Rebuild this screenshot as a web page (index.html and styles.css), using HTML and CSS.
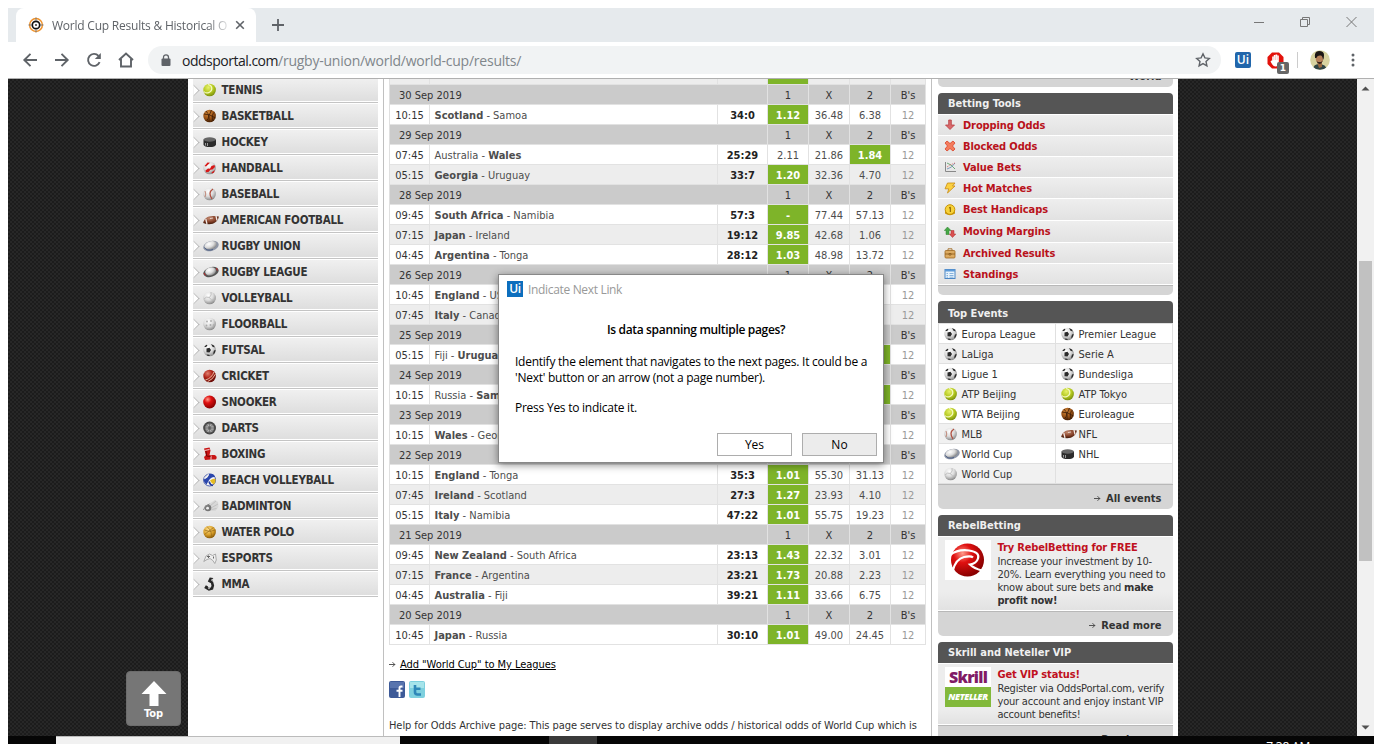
FILE: index.html
```
<!DOCTYPE html>
<html lang="en">
<head>
<meta charset="utf-8">
<title>World Cup Results &amp; Historical Odds</title>
<link rel="stylesheet" href="styles.css">
</head>
<body>
<svg class="defs" width="0" height="0">
<defs>
<radialGradient id="gy" cx=".4" cy=".3" r=".7"><stop offset="0" stop-color="#e6f06a"/><stop offset=".6" stop-color="#b3c81e"/><stop offset="1" stop-color="#7d9210"/></radialGradient>
<radialGradient id="go" cx=".4" cy=".3" r=".7"><stop offset="0" stop-color="#d48a3c"/><stop offset=".6" stop-color="#9a5214"/><stop offset="1" stop-color="#4c2406"/></radialGradient>
<radialGradient id="gw" cx=".4" cy=".3" r=".7"><stop offset="0" stop-color="#fff"/><stop offset=".55" stop-color="#dcdcdc"/><stop offset="1" stop-color="#8c8c8c"/></radialGradient>
<radialGradient id="gr" cx=".35" cy=".3" r=".7"><stop offset="0" stop-color="#ff9a8a"/><stop offset=".4" stop-color="#e01010"/><stop offset="1" stop-color="#8a0000"/></radialGradient>
<radialGradient id="gc" cx=".35" cy=".3" r=".7"><stop offset="0" stop-color="#e08070"/><stop offset=".5" stop-color="#b02318"/><stop offset="1" stop-color="#6a0c08"/></radialGradient>
<radialGradient id="gg" cx=".4" cy=".3" r=".7"><stop offset="0" stop-color="#ffe08a"/><stop offset=".6" stop-color="#d9a02a"/><stop offset="1" stop-color="#8a5a08"/></radialGradient>
<radialGradient id="gb" cx=".4" cy=".3" r=".7"><stop offset="0" stop-color="#c48a70"/><stop offset=".6" stop-color="#844028"/><stop offset="1" stop-color="#401808"/></radialGradient>
<symbol id="tennis" viewBox="0 0 16 14"><circle cx="6.600" cy="7" r="6.300" fill="url(#gy)"/><path d="M5 1.500C9.500 2 10 7.500 6.500 9.200S2 10 1 8.500" fill="none" stroke="#f4f9c0" stroke-width="1.200"/></symbol>
<symbol id="basket" viewBox="0 0 16 14"><circle cx="6.600" cy="7" r="6.300" fill="url(#go)"/><path d="M1 5Q7 5 12.500 9M8.500 1Q5 6 6 13M3 2Q8 7 3.500 12M11.500 3Q8 6 10 12" fill="none" stroke="#3a1a06" stroke-width=".8"/></symbol>
<symbol id="puck" viewBox="0 0 16 14"><path d="M.5 4.500v5c0 3.400 12.500 3.400 12.500 0v-5z" fill="#2c2c2c"/><ellipse cx="6.700" cy="4.500" rx="6.200" ry="2.200" fill="#666"/><path d="M2.500 8v2.500M4.500 8v3" stroke="#9a9a9a"/></symbol>
<symbol id="hand" viewBox="0 0 16 14"><circle cx="6.600" cy="7" r="6.300" fill="url(#gw)"/><path d="M1.500 5L4.500 1.500l2.500.2L3 5.500zM2.500 9.500L5 7.500l2 .3L8.500 5l3-1 .5 2-2.500 2.500-2 .3L5.500 11l-2.500.3zM8.500 11.500l3.300-2.500-.8 2.500-2 1z" fill="#d81818"/></symbol>
<symbol id="base" viewBox="0 0 16 14"><circle cx="6.600" cy="7" r="6.300" fill="url(#gw)"/><path d="M10 2Q4.500 5.500 9 11.800" fill="none" stroke="#b05040" stroke-width="1.300"/><path d="M2 4Q3.500 7 2 10" fill="none" stroke="#c08878"/></symbol>
<symbol id="amfoot" viewBox="0 0 16 14"><path d="M.2 10C1 4.500 6 1.500 15.800 3.500 15 10 8 13 .2 10z" fill="url(#gb)"/><path d="M2.800 6l1.200 5M13 3l1 4.500" stroke="#f2eae6" stroke-width="1.300"/><path d="M7 5.500l3-.5" stroke="#f2eae6" stroke-width=".8"/></symbol>
<symbol id="rugby" viewBox="0 0 16 14"><ellipse cx="8" cy="7" rx="7.900" ry="5" transform="rotate(-17 8 7)" fill="#8d95a6"/><ellipse cx="7.800" cy="6.200" rx="6.300" ry="4" transform="rotate(-17 8 7)" fill="url(#gw)"/><path d="M1.500 8.500Q4 12.500 10 10.500" fill="none" stroke="#4f6186"/></symbol>
<symbol id="rleague" viewBox="0 0 16 14"><ellipse cx="8" cy="7" rx="7.900" ry="4.800" transform="rotate(-17 8 7)" fill="#555"/><ellipse cx="7.800" cy="6.300" rx="5.500" ry="4" transform="rotate(-17 8 7)" fill="url(#gw)"/><path d="M1 8l1.500 2.500M13.500 3l.8 2.500" stroke="#c02828"/></symbol>
<symbol id="volley" viewBox="0 0 16 14"><circle cx="6.600" cy="7" r="6.300" fill="url(#gw)"/><path d="M6.500 6.500Q3 5 1 8M6.500 6.500Q9 4 8 1M6.500 6.500Q8 10 12 9" fill="none" stroke="#b8b8b8" stroke-width=".8"/></symbol>
<symbol id="floor" viewBox="0 0 16 14"><circle cx="6.600" cy="7" r="6.300" fill="url(#gw)"/><g fill="#aaa"><circle cx="4" cy="4.500" r=".9"/><circle cx="8" cy="4" r=".9"/><circle cx="3.500" cy="8.500" r=".9"/><circle cx="7.500" cy="8" r="1"/><circle cx="10.500" cy="8" r=".8"/></g></symbol>
<symbol id="soccer" viewBox="0 0 16 14"><circle cx="6.600" cy="7" r="6.300" fill="url(#gw)"/><path d="M3.500 5.500l3-.7 1.500 2.200-1.500 2.500-3-.3zM1.200 4l2-2.300 1.300.6-1.300 1.700zM8 1l3 1.400.8 2-2.300-.6zM11 7.500l1.700-.5-1 3.300-1.700.7zM3.500 11.500l2.500.3 1 1.200-2.500-.3z" fill="#2a2a2a"/></symbol>
<symbol id="cricket" viewBox="0 0 16 14"><circle cx="6.600" cy="7" r="6.300" fill="url(#gc)"/><path d="M11 2.800Q9 9 2.200 11.200M12.500 5Q10 10.500 4.500 12.700" fill="none" stroke="#f0c8b0" stroke-width=".9"/></symbol>
<symbol id="snook" viewBox="0 0 16 14"><circle cx="6.600" cy="7" r="6.400" fill="url(#gr)"/></symbol>
<symbol id="darts" viewBox="0 0 16 14"><circle cx="6.600" cy="7" r="6.400" fill="#484848"/><circle cx="6.600" cy="7" r="4.500" fill="#999"/><circle cx="6.600" cy="7" r="2.600" fill="#888" stroke="#ddd" stroke-width=".6"/><path d="M6.600 1v12M.6 7h12M2.500 3l8 8M10.500 3l-8 8" stroke="#555" stroke-width=".6"/></symbol>
<symbol id="box" viewBox="0 0 16 14"><path d="M1 1.500L6.500.5l1 3-1 4.500h5c3 1 2.500 4 1 4.500H8L2 13l-1-3 2-2z" fill="#c81414"/><path d="M1.500 3.500l5-1M8 8.500v4" stroke="#fff" stroke-width=".8"/><path d="M3 4l.5 5 4 .5" stroke="#700" fill="none"/></symbol>
<symbol id="beach" viewBox="0 0 16 14"><circle cx="6.600" cy="7" r="6" fill="#f4f4f4" stroke="#223a9c" stroke-width=".8"/><path d="M6 1Q11 0 12 4 8 3.500 5.500 8L3.500 11.500Q.5 9 .6 6.500 4.500 5.500 6 1z" fill="#2a46ac"/><path d="M1.500 5Q4.500 4.500 5.500 1.200" stroke="#eee" stroke-width="1.200" fill="none"/><path d="M7 7.500q3-2.500 5.600-1.500Q13 9.500 11 11.500 8.500 10.500 7 7.500z" fill="#e4bb22"/><path d="M6 8.500q1 3.500 4 4" stroke="#223a9c" stroke-width="1.600" fill="none"/></symbol>
<symbol id="badm" viewBox="0 0 16 14"><path d="M6 5l6-4 3 2 .5 5-3 4L8 12z" fill="#d8d8d8"/><path d="M7 7l6-5M8 9l7-4M8.500 10.500l5-1" stroke="#b8b8b8" stroke-width=".7"/><circle cx="5" cy="9" r="3.300" fill="#777"/><circle cx="4.600" cy="9.200" r="1.400" fill="#eee"/><path d="M.5 11q1-5 6-6" stroke="#888" fill="none"/></symbol>
<symbol id="wpolo" viewBox="0 0 16 14"><circle cx="6.600" cy="7" r="6.300" fill="url(#gg)"/><path d="M1.500 5Q6 8 12.500 5M4 1.500Q10 7 8 13M1.500 9.500L10.500 2.500" fill="none" stroke="#9a6a18" stroke-width=".7"/></symbol>
<symbol id="esport" viewBox="0 0 16 14"><path d="M.8 10.500L3 5l3.500-2 3 1.500 3-1.500.8 6-1.500 3.500-2-3L7 7.500l-3 1z" fill="#eee" stroke="#999" stroke-width=".8"/><path d="M4 5.500h3M5.500 4.500v2.500M10.500 5.500v2" stroke="#666"/></symbol>
<symbol id="mma" viewBox="0 0 16 14"><path d="M10 2.300L7.500 2 6.500 4l2.500 1.500.8 3-.8 3-3 .8L3 10.500 4 8.800" fill="none" stroke="#262626" stroke-width="2.600"/><circle cx="9.300" cy="2.600" r=".9" fill="#ccc"/><circle cx="6" cy="11.500" r=".8" fill="#ccc"/></symbol>
<symbol id="arr" viewBox="0 0 7 7"><path d="M0 3.500h6M3.500 1.200L5.800 3.500 3.500 5.800" fill="none" stroke="#444" stroke-width=".9"/></symbol>
</defs>
</svg>

<div class="window">
  <div class="tabs">
    <div class="tab">
      <svg width="16" height="16" viewBox="0 0 16 16"><circle cx="8" cy="8" r="6.400" fill="#fff" stroke="#f0922a" stroke-width="1.500"/><path d="M8 .5v3M8 12.500v3M.5 8h3M12.500 8h3" stroke="#777" stroke-width="1"/><circle cx="8" cy="8" r="3.700" fill="#fff" stroke="#111" stroke-width="1.700"/><circle cx="8" cy="8" r=".9" fill="#222"/></svg>
      <span class="title">World Cup Results &amp; Historical O</span>
      <svg class="x" width="10" height="10" viewBox="0 0 10 10"><path d="M1.200 1.200l7.600 7.600M8.800 1.200L1.200 8.800" stroke="#5f6368" stroke-width="1.600"/></svg>
    </div>
    <svg class="plus" width="12" height="12" viewBox="0 0 12 12"><path d="M6 0v12M0 6h12" stroke="#5f6368" stroke-width="1.800"/></svg>
    <svg class="winbtn" width="104" height="12" viewBox="0 0 104 12"><g fill="none" stroke="#777"><path d="M0 6.500h10M46.500 3.500h7v7h-7zM48.500 3.500v-2h7v7h-2"/><path d="M92.500 1l10 10M102.500 1l-10 10"/></g></svg>
  </div>
  <div class="toolbar">
    <svg class="nav" width="112" height="18" viewBox="0 0 112 18"><g fill="none" stroke="#5f6368" stroke-width="1.900"><path d="M15 9H2.500M8.500 2.800L2.300 9l6.200 6.200M33 9h12.500M39.500 2.800L45.700 9l-6.200 6.200"/><path d="M77.600 11.200A6 6 0 1 1 76.500 4.800"/><path d="M97 9l7-6.500L111 9M99 8v7.500h10V8"/></g><path d="M78.800 2v6h-6z" fill="#5f6368"/></svg>
    <div class="url">
      <svg width="10" height="13" viewBox="0 0 10 13"><rect x=".5" y="4.500" width="9" height="7.500" rx="1" fill="#5f6368"/><path d="M2.500 5V3.300a2.500 2.500 0 0 1 5 0V5" fill="none" stroke="#5f6368" stroke-width="1.300"/></svg>
      <span class="addr"><b>oddsportal.com</b>/rugby-union/world/world-cup/results/</span>
      <svg class="star" width="16" height="16" viewBox="0 0 16 16"><path d="M8 1.800l1.900 4.100 4.400.5-3.300 3 .9 4.400L8 11.600l-3.900 2.200.9-4.400-3.300-3 4.400-.5z" fill="none" stroke="#5f6368" stroke-width="1.400"/></svg>
    </div>
    <span class="uipath">Ui</span>
    <span class="adb"><svg width="17" height="17" viewBox="0 0 17 17"><path d="M5 .5h7L16.500 5v7L12 16.500H5L.5 12V5z" fill="#e3120b"/><path d="M5.200 8.500V4.500h1.600V3h1.700v-.5h1.700v1h1.600V11q-.3 3.500-3.300 3.500-2 0-3.200-2L3.500 9.500l1-.9z" fill="#fff"/><path d="M6.900 4.500v3.500M8.500 3v5M10.200 4v4" stroke="#f09a96" stroke-width=".5"/></svg><em>1</em></span>
    <i class="vsep"></i>
    <svg class="avatar" width="20" height="20" viewBox="0 0 20 20"><clipPath id="av"><circle cx="10" cy="10" r="9.800"/></clipPath><g clip-path="url(#av)"><path d="M0 0h20v20H0z" fill="#d8d3a0"/><path d="M3 20q0-6 6-6 7 0 8 6z" fill="#2f4444"/><path d="M7 12h5v5l-3 1z" fill="#9a6a40"/><ellipse cx="9.500" cy="8.500" rx="3.800" ry="5" fill="#b58058"/><path d="M5 8Q4 1 9 1t5 4q0 4-1 5-.3-4-2-4.500Q7 5 6.500 8z" fill="#1c1614"/><path d="M6.500 11q1 3 3 3t3.300-3.500L11 12H8z" fill="#34241c"/></g></svg>
    <svg class="dots" width="4" height="14" viewBox="0 0 4 14"><g fill="#5f6368"><circle cx="2" cy="2" r="1.500"/><circle cx="2" cy="7" r="1.500"/><circle cx="2" cy="12" r="1.500"/></g></svg>
  </div>

  <div class="view">
    <div class="dark left"><div class="totop"><svg width="26" height="27" viewBox="0 0 26 27"><path d="M13 1l12.500 13H17.500v12h-9V14H.5z" fill="#fff"/></svg><span>Top</span></div></div>
    <div class="side">
      <ul>
        <li><svg><use href="#tennis"/></svg>TENNIS</li>
        <li><svg><use href="#basket"/></svg>BASKETBALL</li>
        <li><svg><use href="#puck"/></svg>HOCKEY</li>
        <li><svg><use href="#hand"/></svg>HANDBALL</li>
        <li><svg><use href="#base"/></svg>BASEBALL</li>
        <li><svg><use href="#amfoot"/></svg>AMERICAN FOOTBALL</li>
        <li><svg><use href="#rugby"/></svg>RUGBY UNION</li>
        <li><svg><use href="#rleague"/></svg>RUGBY LEAGUE</li>
        <li><svg><use href="#volley"/></svg>VOLLEYBALL</li>
        <li><svg><use href="#floor"/></svg>FLOORBALL</li>
        <li><svg><use href="#soccer"/></svg>FUTSAL</li>
        <li><svg><use href="#cricket"/></svg>CRICKET</li>
        <li><svg><use href="#snook"/></svg>SNOOKER</li>
        <li><svg><use href="#darts"/></svg>DARTS</li>
        <li><svg><use href="#box"/></svg>BOXING</li>
        <li><svg><use href="#beach"/></svg>BEACH VOLLEYBALL</li>
        <li><svg><use href="#badm"/></svg>BADMINTON</li>
        <li><svg><use href="#wpolo"/></svg>WATER POLO</li>
        <li><svg><use href="#esport"/></svg>ESPORTS</li>
        <li><svg><use href="#mma"/></svg>MMA</li>
      </ul>
    </div>
    <div class="main">
      <table>
        <colgroup><col class="c1"><col class="c2"><col class="c3"><col class="c4"><col class="c4"><col class="c4"><col class="c5"></colgroup>
        <tr class="e cut"><td></td><td></td><td></td><td class="g"></td><td></td><td></td><td></td></tr>
        <tr class="h"><th colspan="3">30 Sep 2019</th><th>1</th><th>X</th><th>2</th><th>B's</th></tr>
        <tr><td>10:15</td><td><b>Scotland</b> - Samoa</td><td>34:0</td><td class="g">1.12</td><td>36.48</td><td>6.38</td><td>12</td></tr>
        <tr class="h"><th colspan="3">29 Sep 2019</th><th>1</th><th>X</th><th>2</th><th>B's</th></tr>
        <tr><td>07:45</td><td>Australia - <b>Wales</b></td><td>25:29</td><td>2.11</td><td>21.86</td><td class="g">1.84</td><td>12</td></tr>
        <tr class="e"><td>05:15</td><td><b>Georgia</b> - Uruguay</td><td>33:7</td><td class="g">1.20</td><td>32.36</td><td>4.70</td><td>12</td></tr>
        <tr class="h"><th colspan="3">28 Sep 2019</th><th>1</th><th>X</th><th>2</th><th>B's</th></tr>
        <tr><td>09:45</td><td><b>South Africa</b> - Namibia</td><td>57:3</td><td class="g">-</td><td>77.44</td><td>57.13</td><td>12</td></tr>
        <tr class="e"><td>07:15</td><td><b>Japan</b> - Ireland</td><td>19:12</td><td class="g">9.85</td><td>42.68</td><td>1.06</td><td>12</td></tr>
        <tr><td>04:45</td><td><b>Argentina</b> - Tonga</td><td>28:12</td><td class="g">1.03</td><td>48.98</td><td>13.72</td><td>12</td></tr>
        <tr class="h"><th colspan="3">26 Sep 2019</th><th>1</th><th>X</th><th>2</th><th>B's</th></tr>
        <tr><td>10:45</td><td><b>England</b> - USA</td><td></td><td class="g"></td><td></td><td></td><td>12</td></tr>
        <tr class="e"><td>07:45</td><td><b>Italy</b> - Canada</td><td></td><td class="g"></td><td></td><td></td><td>12</td></tr>
        <tr class="h"><th colspan="3">25 Sep 2019</th><th></th><th></th><th></th><th>B's</th></tr>
        <tr><td>05:15</td><td>Fiji - <b>Uruguay</b></td><td></td><td></td><td></td><td class="g"></td><td>12</td></tr>
        <tr class="h"><th colspan="3">24 Sep 2019</th><th></th><th></th><th></th><th>B's</th></tr>
        <tr><td>10:15</td><td>Russia - <b>Samoa</b></td><td></td><td></td><td></td><td class="g"></td><td>12</td></tr>
        <tr class="h"><th colspan="3">23 Sep 2019</th><th></th><th></th><th></th><th>B's</th></tr>
        <tr><td>10:15</td><td><b>Wales</b> - Georgia</td><td></td><td class="g"></td><td></td><td></td><td>12</td></tr>
        <tr class="h"><th colspan="3">22 Sep 2019</th><th></th><th></th><th></th><th>B's</th></tr>
        <tr><td>10:15</td><td><b>England</b> - Tonga</td><td>35:3</td><td class="g">1.01</td><td>55.30</td><td>31.13</td><td>12</td></tr>
        <tr class="e"><td>07:45</td><td><b>Ireland</b> - Scotland</td><td>27:3</td><td class="g">1.27</td><td>23.93</td><td>4.10</td><td>12</td></tr>
        <tr><td>05:15</td><td><b>Italy</b> - Namibia</td><td>47:22</td><td class="g">1.01</td><td>55.75</td><td>19.23</td><td>12</td></tr>
        <tr class="h"><th colspan="3">21 Sep 2019</th><th>1</th><th>X</th><th>2</th><th>B's</th></tr>
        <tr><td>09:45</td><td><b>New Zealand</b> - South Africa</td><td>23:13</td><td class="g">1.43</td><td>22.32</td><td>3.01</td><td>12</td></tr>
        <tr class="e"><td>07:15</td><td><b>France</b> - Argentina</td><td>23:21</td><td class="g">1.73</td><td>20.88</td><td>2.23</td><td>12</td></tr>
        <tr><td>04:45</td><td><b>Australia</b> - Fiji</td><td>39:21</td><td class="g">1.11</td><td>33.66</td><td>6.75</td><td>12</td></tr>
        <tr class="h"><th colspan="3">20 Sep 2019</th><th>1</th><th>X</th><th>2</th><th>B's</th></tr>
        <tr><td>10:45</td><td><b>Japan</b> - Russia</td><td>30:10</td><td class="g">1.01</td><td>49.00</td><td>24.45</td><td>12</td></tr>
      </table>
      <div class="add"><svg width="7" height="7"><use href="#arr"/></svg><a>Add "World Cup" to My Leagues</a></div>
      <div class="social">
        <svg width="16" height="18" viewBox="0 0 16 18"><rect width="16" height="17" rx="2" fill="#3d5a98"/><path d="M1 1h14v6H1z" fill="#5874ae"/><path d="M13.500 5.500h-1.500q-1.500 0-1.500 1.700V16M7.500 9.700h6" stroke="#fff" stroke-width="1.900" fill="none"/></svg>
        <svg width="16" height="18" viewBox="0 0 16 18"><rect width="16" height="17" rx="2" fill="#7ed0de"/><path d="M1 1h14v6H1z" fill="#a6e4ea"/><path d="M6 4v7q0 2.500 2.500 2.500H12M5.500 7.700h6" stroke="#2e87b8" stroke-width="2.600" fill="none"/></svg>
      </div>
      <p class="help">Help for Odds Archive page: This page serves to display archive odds / historical odds of World Cup which is<br>sorted in World category of Oddsportal odds comparison service. In World Cup results archived here you</p>
    </div>
    <div class="right">
      <div class="foot first"><b>World</b></div>
      <section class="tools">
        <h2>Betting Tools</h2>
        <ul>
          <li><svg viewBox="0 0 12 12"><path d="M4.700 1h2.600v5H10.500L6 10.500 1.500 6h3.200z" fill="#d9696b" stroke="#b83c40" stroke-width=".8"/></svg>Dropping Odds</li>
          <li><svg viewBox="0 0 12 12"><path d="M1 3l2-2 3 2.500L9 1l2 2-2.500 3L11 9l-2 2-3-2.500L3 11 1 9l2.500-3z" fill="#f47c5c" stroke="#d8432a" stroke-width=".8"/></svg>Blocked Odds</li>
          <li><svg viewBox="0 0 12 12"><path d="M1.500 1v9.500H12" stroke="#888" fill="none"/><path d="M3 2q4 1 8 6" stroke="#4a9a5a" stroke-width=".8" fill="none"/><path d="M3 8q5-1 8-6" stroke="#6488b0" stroke-width=".8" fill="none"/><path d="M3 6l3-2 5-2" stroke="#d05050" stroke-width=".8" fill="none" stroke-dasharray="1 1"/></svg>Value Bets</li>
          <li><svg viewBox="0 0 12 12"><path d="M3.500 1H11L8.500 4h2.500L3.500 11l1.300-4.200H1z" fill="#fbd040" stroke="#c88a10" stroke-width=".8"/></svg>Hot Matches</li>
          <li class="t"><svg viewBox="0 0 12 12"><path d="M1 6v3.500q5 3.500 10 0V6z" fill="#c89408"/><circle cx="6" cy="5.500" r="4.800" fill="#f7d23a" stroke="#c89408"/><path d="M5 4.200l1.300-1V8" stroke="#7a5600" fill="none"/></svg>Best Handicaps</li>
          <li class="t"><svg viewBox="0 0 12 12"><path d="M3.500 1L7 4.500H5v4H2v-4H.3z" fill="#45a845" stroke="#2c7c2c" stroke-width=".5"/><path d="M8.500 11.500L5.300 8H7V4.500h3V8h1.800z" fill="#da5050" stroke="#a82c2c" stroke-width=".5"/></svg>Moving Margins</li>
          <li><svg viewBox="0 0 12 12"><path d="M4 4V1.800h4V4" stroke="#a87838" fill="none"/><rect x="1" y="3.500" width="10" height="7.500" rx="1" fill="#dcab62" stroke="#a06820" stroke-width=".8"/><path d="M1 7h10M5 6.500h2v1.500H5z" stroke="#8a5818" stroke-width=".8" fill="#f4e0a0"/></svg>Archived Results</li>
          <li><svg viewBox="0 0 12 12"><rect x="1" y="1.500" width="10" height="9" fill="#e8f3fc" stroke="#4b86c4"/><path d="M1 2.500h10" stroke="#5d9ad8" stroke-width="2"/><path d="M2.500 5.500H4M2.500 7.500H4M2.500 9.200H4M5.500 5.500h4M5.500 7.500h4M5.500 9.200h4" stroke="#7cabd8" stroke-width=".9"/></svg>Standings</li>
        </ul>
        <div class="foot thin"></div>
      </section>
      <section class="events">
        <h2>Top Events</h2>
        <div class="grid">
          <a><svg><use href="#soccer"/></svg>Europa League</a><a><svg><use href="#soccer"/></svg>Premier League</a>
          <a><svg><use href="#soccer"/></svg>LaLiga</a><a><svg><use href="#soccer"/></svg>Serie A</a>
          <a><svg><use href="#soccer"/></svg>Ligue 1</a><a><svg><use href="#soccer"/></svg>Bundesliga</a>
          <a><svg><use href="#tennis"/></svg>ATP Beijing</a><a><svg><use href="#tennis"/></svg>ATP Tokyo</a>
          <a><svg><use href="#tennis"/></svg>WTA Beijing</a><a><svg><use href="#basket"/></svg>Euroleague</a>
          <a><svg><use href="#base"/></svg>MLB</a><a><svg><use href="#amfoot"/></svg>NFL</a>
          <a><svg><use href="#rugby"/></svg>World Cup</a><a><svg><use href="#puck"/></svg>NHL</a>
          <a><svg><use href="#volley"/></svg>World Cup</a><a></a>
        </div>
        <div class="foot"><svg width="7" height="7"><use href="#arr"/></svg><b>All events</b></div>
      </section>
      <section>
        <h2>RebelBetting</h2>
        <div class="body rb">
          <svg width="46" height="40" viewBox="0 0 46 40"><path d="M0 0h46v40H0z" fill="#fff"/><circle cx="22.500" cy="20" r="16.500" fill="url(#gr)"/><path d="M5 15Q13 9 24 10.500q11 1.500 9 8-1.500 5-8 6 4 4 12 6" fill="none" stroke="#fff" stroke-width="2.200"/><path d="M8 30Q11 19 19 17q7-1.500 9 .5" fill="none" stroke="#fff" stroke-width="2.200"/></svg>
          <div><h3>Try RebelBetting for FREE</h3><p>Increase your investment by 10-<br>20%. Learn everything you need to<br>know about sure bets and <b>make<br>profit now!</b></p></div>
        </div>
        <div class="foot"><svg width="7" height="7"><use href="#arr"/></svg><b>Read more</b></div>
      </section>
      <section>
        <h2>Skrill and Neteller VIP</h2>
        <div class="body sk">
          <div class="logos"><b>Skrill</b><i>NETELLER</i></div>
          <div><h3>Get VIP status!</h3><p>Register via OddsPortal.com, verify<br>your account and enjoy instant VIP<br>account benefits!</p></div>
        </div>
        <div class="foot"><svg width="7" height="7"><use href="#arr"/></svg><b>Read more</b></div>
      </section>
    </div>
    <div class="dark"></div>
    <div class="scroll"><svg width="9" height="5" viewBox="0 0 9 5"><path d="M.5 4.500L4.500.5l4 4z" fill="#505050"/></svg><i></i><svg width="9" height="5" viewBox="0 0 9 5"><path d="M.5.5l4 4 4-4z" fill="#505050"/></svg></div>
  </div>
  <div class="taskbar"><i class="search"></i><i class="active"></i><span>7:38 AM</span></div>
</div>

<div class="dialog">
  <div class="dt"><span class="uipath">Ui</span><span class="dtitle">Indicate Next Link</span></div>
  <h4><span>Is data spanning multiple pages?</span></h4>
  <p class="l1">Identify the element that navigates to the next pages. It could be a</p>
  <p class="l2">'Next' button or an arrow (not a page number).</p>
  <p class="l3">Press Yes to indicate it.</p>
  <div class="btns"><button>Yes</button><button class="no">No</button></div>
</div>
</body>
</html>
```

FILE: styles.css
```
* { box-sizing: border-box; margin: 0; padding: 0; }
body { background: #fff; padding: 8px 8px 0; height: 744px; overflow: hidden; font-family: "DejaVu Sans Condensed", "DejaVu Sans", sans-serif; font-stretch: condensed; font-size: 11px; color: #333; }
.defs { display: block; width: 0; height: 0; position: absolute; }
svg { display: block; flex: none; }
i, em { font-style: normal; }
ul { list-style: none; }
.window { height: 736px; display: flex; flex-direction: column; }

.tabs { height: 34px; flex: none; background: #e6eaed; display: flex; align-items: center; padding-left: 8px; font-family: "Open Sans", sans-serif; font-stretch: normal; }
.tab { width: 240px; height: 34px; background: #fff; border-radius: 8px 8px 0 0; display: flex; align-items: center; padding-left: 12px; }
.title { width: 178px; margin: 0 5px 0 8px; font-size: 12px; letter-spacing: -.22px; color: #5f6368; white-space: nowrap; overflow: hidden; -webkit-mask-image: linear-gradient(90deg, #000 155px, transparent 180px); }
.plus { margin-left: 16px; }
.winbtn { margin-left: auto; margin-right: 16px; margin-bottom: 7px; }
.toolbar { height: 37px; flex: none; display: flex; align-items: center; padding: 0 19px 0 14px; border-bottom: 1px solid #b0b0b0; background: #fff; }
.url { width: 1073px; height: 28px; border-radius: 14px; background: #f1f3f4; margin-left: 14px; display: flex; align-items: center; padding: 0 10px 0 13px; }
.addr { margin-left: 11px; font: 14px "Open Sans", sans-serif; letter-spacing: -.24px; color: #80868b; white-space: nowrap; }
.addr b { font-weight: 400; color: #202124; letter-spacing: -.5px; }
.star { margin-left: auto; }
.uipath { width: 16px; height: 16px; background: #0c6ebd; color: #fff; font: 600 12px/16px "Open Sans", sans-serif; text-align: center; flex: none; }
.toolbar .uipath { margin-left: 14px; border-radius: 2px; background: #2166ab; }
.adb { position: relative; margin-left: 16px; }
.adb em { position: absolute; left: 10px; top: 10px; width: 12px; height: 12px; background: #666; border-radius: 2px; color: #fff; font: bold 9px/12px "DejaVu Sans", sans-serif; text-align: center; }
.vsep { width: 1px; height: 16px; background: #ccc; margin-left: 13px; }
.avatar { margin-left: 12px; }
.dots { margin-left: auto; }

.view { height: 657px; flex: none; display: flex; overflow: hidden; }
.dark { width: 179px; flex: none; background: conic-gradient(#1c1c1c 25%, #272727 0 50%, #1c1c1c 0 75%, #272727 0) 0 0 / 4px 4px; }
.dark.left { width: 180px; display: flex; align-items: flex-end; justify-content: flex-end; padding: 0 7px 10px 0; }
.totop { width: 55px; height: 55px; border-radius: 4px; background: #767676; border: 1px solid #6c6c6c; display: flex; flex-direction: column; align-items: center; padding-top: 8px; color: #fff; font-weight: bold; }
.totop span { line-height: 13px; }
.side { width: 195px; flex: none; background: #fff; padding-left: 5px; }
.side ul { margin-top: -2px; width: 185px; }
.side li { height: 26px; border-bottom: 1px solid #c4c4c4; background: linear-gradient(#fff 0 1px, #f0f0f0 1px, #dedede 24px, #fff 24px); display: flex; align-items: center; gap: 2.500px; padding: 0 0 0 10px; font-weight: bold; font-size: 11.500px; letter-spacing: -.25px; white-space: nowrap; position: relative; }
.side li::before { content: ""; position: absolute; left: -4px; top: 9px; width: 8px; height: 8px; background: #fff; border: 1px solid #aaa; border-left: 0; border-bottom: 0; transform: rotate(45deg); clip-path: polygon(0 0, 100% 0, 100% 100%); }
.side li svg, .grid svg { width: 16px; height: 14px; }

.main { width: 549px; flex: none; background: #fff; border-left: 1px solid #c0c0c0; border-right: 1px solid #c0c0c0; padding-left: 5px; }
table { width: 537px; table-layout: fixed; border-collapse: separate; border-spacing: 0; border-left: 1px solid #e0e0e0; }
.c1 { width: 40px; } .c2 { width: 288px; } .c3 { width: 50px; } .c4 { width: 41px; } .c5 { width: 35px; }
tr { height: 20px; }
td, th { height: 20px; line-height: 16px; padding-top: 3px; border-right: 1px solid #e2e2e2; border-bottom: 1px solid #e2e2e2; text-align: center; color: #4d4d4d; font-weight: 400; white-space: nowrap; overflow: hidden; }
tr.cut, tr.cut td { height: 6px; padding: 0; }
td { background: #fff; }
.e td { background: #ededed; }
.h th { background: #cbcbcb; color: #333; }
.h th:first-child { text-align: left; padding-left: 9px; }
td:first-child { color: #333; }
td:nth-child(2) { text-align: left; padding-left: 4.500px; }
td:nth-child(3) { font-weight: bold; color: #222; }
td:nth-child(7) { color: #999; }
tr td.g { background: #7eb429; color: #fff; font-weight: bold; }
.add { display: flex; align-items: center; gap: 4px; margin-top: 12px; height: 15px; letter-spacing: -.05px; }
.add a { text-decoration: underline; color: #000; }
.social { display: flex; gap: 4px; margin-top: 9px; }
.help { margin-top: 18px; line-height: 17px; letter-spacing: -.07px; white-space: nowrap; }

.right { width: 246px; flex: none; background: #fff; padding: 0 5px 0 6px; }
.foot { height: 25px; border-top: 1px solid #b8b8b8; background: #d5d5d5; border-radius: 0 0 5px 5px; display: flex; align-items: center; justify-content: flex-end; gap: 5px; padding: 2px 11.500px 0 0; }
.foot.first { height: 8px; border: 0; align-items: flex-end; padding-bottom: 4px; overflow: hidden; }
.foot.thin { height: 10px; }
section { margin-top: 6px; }
h2 { height: 21px; background: #555; color: #f0f0f0; border-radius: 4px 4px 0 0; font-size: 11px; line-height: 22px; padding-left: 10px; }
.tools li { height: 21px; background: linear-gradient(#eeeeee, #e2e2e2); border-top: 1px solid #fff; display: flex; align-items: center; gap: 7px; padding-left: 6px; color: #b9121b; font-weight: bold; letter-spacing: -.1px; }
.tools li.t { height: 22px; }
.tools li svg { width: 12px; height: 12px; }
.tools ul { border-bottom: 1px solid #fff; }
.events h2 { height: 22px; line-height: 25px; }
.grid { display: grid; grid-template-columns: 117px 117px; border-top: 1px solid #e0e0e0; border-left: 1px solid #e0e0e0; border-right: 1px solid #e0e0e0; }
.grid a { height: 20px; display: flex; align-items: center; gap: 1.500px; padding: 1px 0 0 5px; background: #fff; border-right: 1px solid #e0e0e0; border-bottom: 1px solid #e0e0e0; }
.grid a:nth-child(4n+3), .grid a:nth-child(4n) { background: #f1f1f1; }
.body { display: flex; border-top: 1px solid #fff; border-bottom: 1px solid #fff; background: linear-gradient(#ededed 75%, #e2e2e2); padding: 3px 0 0 7px; gap: 6.500px; white-space: nowrap; }
.body.rb { height: 75px; } .body.sk { height: 62px; }
.body h3 { font-size: 11px; color: #c01020; line-height: 15px; letter-spacing: -.15px; }
.body p { line-height: 13px; letter-spacing: -.21px; }
.logos { width: 46px; height: 40px; background: #fff; }
.logos b { display: block; height: 20px; font: 800 16px/20px "Open Sans", sans-serif; letter-spacing: -.8px; color: #811b66; text-align: center; }
.logos i { display: block; height: 20px; background: #82b93b; color: #fff; font: italic 800 9px/20px "Open Sans", sans-serif; letter-spacing: -.4px; text-align: center; }

.scroll { flex: 1; background: #f1f1f1; display: flex; flex-direction: column; align-items: center; padding: 7px 0 6px; }
.scroll i { width: 13px; height: 300px; background: #c1c1c1; margin-top: 170px; margin-bottom: auto; }
.taskbar { height: 8px; flex: none; background: #060606; display: flex; overflow: hidden; padding-left: 48px; }
.search { width: 344px; background: #f1f1f1; border-top: 1px solid #bbb; }
.active { width: 48px; margin-left: 149px; background: #3a3a3a; }
.taskbar span { color: #fff; margin: 4px 64px 0 auto; font: 12px/14px "Open Sans", sans-serif; letter-spacing: -.2px; }

.dialog { position: absolute; left: 498px; top: 274px; width: 386px; height: 189px; background: #fff; border: 1px solid #888; box-shadow: 0 2px 8px rgba(0,0,0,.45); font-family: "Open Sans", sans-serif; font-stretch: normal; font-size: 12px; color: #000; padding: 6px 6px 0 16px; white-space: nowrap; letter-spacing: -.25px; }
.dt { display: flex; gap: 5px; margin-left: -8px; height: 16px; line-height: 17px; color: #999; letter-spacing: -.33px; }
.dialog h4 { text-align: center; font-weight: 600; line-height: 16px; margin: 25px 0 16px; letter-spacing: -.33px; }
.dialog p { line-height: 16px; }
.dialog .l3 { margin-top: 14px; }
.btns { display: flex; gap: 10px; justify-content: flex-end; margin-top: 17px; }
.btns button { width: 75px; height: 23px; border: 1px solid #adadad; background: #fff; font: 12px "Open Sans", sans-serif; }
.btns .no { background: #ececec; }
```
